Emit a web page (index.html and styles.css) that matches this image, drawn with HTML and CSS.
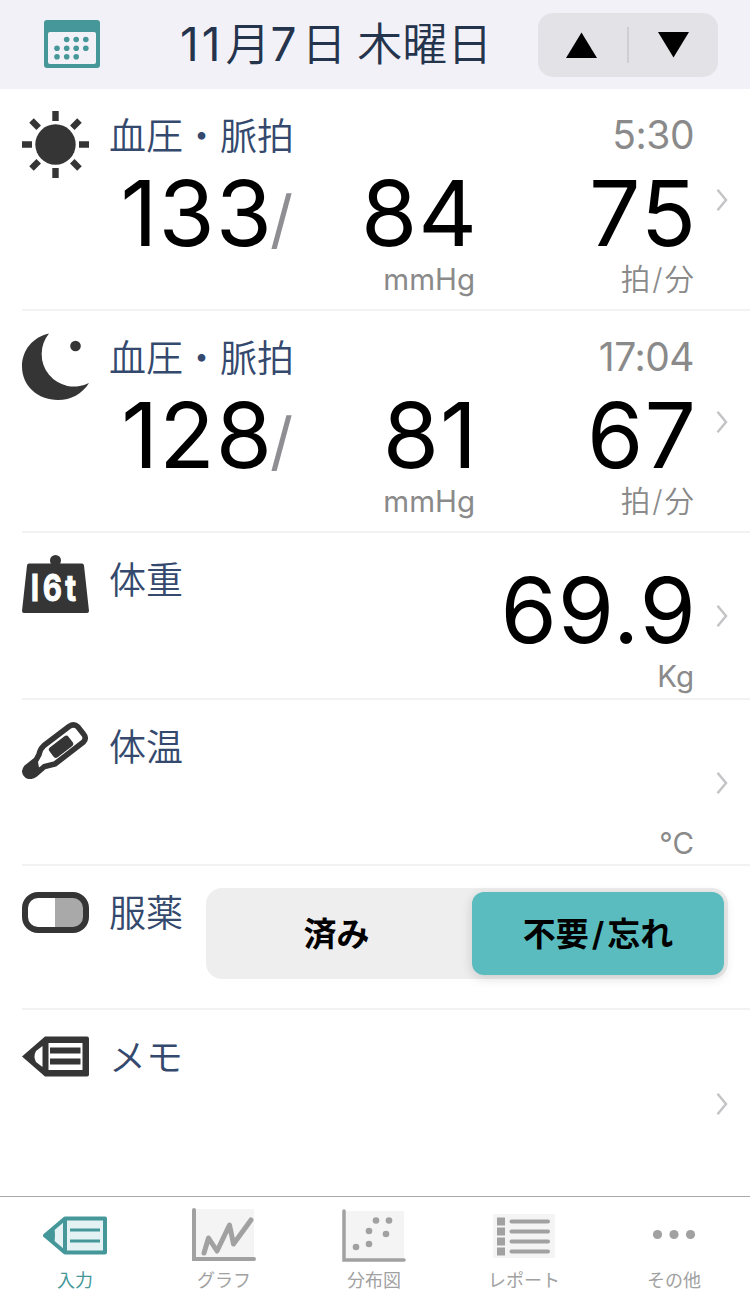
FILE: index.html
```
<!DOCTYPE html>
<html lang="ja">
<head>
  <meta charset="UTF-8">
  <title>血圧・脈拍の記録</title>
  <link rel="stylesheet" href="styles.css">
</head>
<body>

<header class="topo">
  <svg class="calendario" width="56" height="48" viewBox="0 0 56 48">
    <rect width="56" height="48" rx="3" fill="#459799"/>
    <rect x="4" y="12" width="48" height="32" rx="2" fill="#f2f1f7"/>
    <g fill="#459799">
      <circle cx="22.700" cy="19.500" r="2.800"/><circle cx="32.200" cy="19.500" r="2.800"/><circle cx="41.800" cy="19.500" r="2.800"/>
      <circle cx="13" cy="28.300" r="2.800"/><circle cx="22.700" cy="28.300" r="2.800"/><circle cx="32.200" cy="28.300" r="2.800"/><circle cx="41.800" cy="28.300" r="2.800"/>
      <circle cx="13" cy="36.800" r="2.800"/><circle cx="22.700" cy="36.800" r="2.800"/><circle cx="32.200" cy="36.800" r="2.800"/>
    </g>
  </svg>
  <h1><span>11</span>月<span>7</span>日 木曜日</h1>
  <div class="setas">
    <svg width="31" height="26" viewBox="0 0 31 26"><path d="M15.500 0.500 31 26H0z"/></svg>
    <span class="divisor"></span>
    <svg width="31" height="26" viewBox="0 0 31 26"><path d="M0 0h31L15.500 25.500z"/></svg>
  </div>
</header>

<main>
  <section class="linha pressao">
    <svg class="icone" width="67" height="67" viewBox="0 0 67 67">
      <circle cx="33.500" cy="33.500" r="20.200" fill="#353535"/>
      <g stroke="#353535" stroke-width="6.400">
        <path d="M33.500 0v10M33.500 57v10M0 33.500h10M57 33.500h10M9.500 9.500l7.200 7.200M50.300 50.300l7.200 7.200M9.500 57.500l7.200-7.200M50.300 16.700l7.200-7.200"/>
      </g>
    </svg>
    <div class="corpo">
      <div class="cabeca"><h2>血圧・脈拍</h2><span class="hora">5:30</span></div>
      <div class="valores"><div><b>133</b><i>/</i></div><div><b>84</b></div><div><b>75</b></div></div>
      <div class="unidades"><span></span><span>mmHg</span><span class="bpm">拍<em>/</em>分</span></div>
    </div>
    <svg class="avanca" width="12" height="24" viewBox="0 0 12 24"><path d="M1.500 1.800 10 12 1.500 22.200"/></svg>
  </section>

  <section class="linha pressao">
    <svg class="icone" width="67" height="67" viewBox="0 0 67 67">
      <path d="M27 .5A32.500 32.500 0 0 0 67 50C60 61 49 67 36 67C16 67 0 53 0 33.500C0 17 11 4 27 .5z" fill="#353535"/>
      <circle cx="53.500" cy="13" r="5.300" fill="#353535"/>
    </svg>
    <div class="corpo">
      <div class="cabeca"><h2>血圧・脈拍</h2><span class="hora">17:04</span></div>
      <div class="valores"><div><b>128</b><i>/</i></div><div><b>81</b></div><div><b>67</b></div></div>
      <div class="unidades"><span></span><span>mmHg</span><span class="bpm">拍<em>/</em>分</span></div>
    </div>
    <svg class="avanca" width="12" height="24" viewBox="0 0 12 24"><path d="M1.500 1.800 10 12 1.500 22.200"/></svg>
  </section>

  <section class="linha peso">
    <svg class="icone" width="67" height="58" viewBox="0 0 67 58">
      <circle cx="33.500" cy="5.500" r="5.500" fill="#353535"/>
      <path d="M7 8.500H60q1.800 0 2 2L67 56q0 2-2 2H2q-2 0-2-2L5 10.500q.2-2 2-2z" fill="#353535"/>
      <text class="tonelada" transform="scale(.8 1)" x="11 26 54" y="46.500">I6t</text>
    </svg>
    <div class="corpo">
      <h2>体重</h2>
      <div class="medida">
        <div class="valor"><b>69.9</b></div>
        <div class="unidade">Kg</div>
      </div>
    </div>
    <svg class="avanca" width="12" height="24" viewBox="0 0 12 24"><path d="M1.500 1.800 10 12 1.500 22.200"/></svg>
  </section>

  <section class="linha temperatura">
    <svg class="icone" width="67" height="57" viewBox="0 0 67 57">
      <path d="M47 4.500 22 23.500Q18 27 17 32.500L14 38 4.500 45.500Q1 50 5 53.500Q9 55.500 13 52.500L22.500 44.500 33 42 61.500 20Q65 16 61.500 12L56 5Q52 1 47 4.500z" fill="#fff" stroke="#353535" stroke-width="5.500"/>
      <path d="M14 38 4 46Q0 52 6 55Q10 56 13 53L22 45 17 45.500 16 40z" fill="#353535"/>
      <rect x="27" y="18.500" width="24" height="12.500" rx="3" transform="rotate(-37 39 24.700)" fill="#353535"/>
    </svg>
    <div class="corpo">
      <h2>体温</h2>
      <div class="medida">
        <div class="valor"></div>
        <div class="unidade">°C</div>
      </div>
    </div>
    <svg class="avanca" width="12" height="24" viewBox="0 0 12 24"><path d="M1.500 1.800 10 12 1.500 22.200"/></svg>
  </section>

  <section class="linha remedio">
    <svg class="icone" width="67" height="41" viewBox="0 0 67 41">
      <rect x="3" y="3" width="61" height="35" rx="13" fill="#fff"/>
      <path d="M33 3h18q13 0 13 13v9q0 13-13 13H33z" fill="#a9a9a9"/>
      <rect x="3" y="3" width="61" height="35" rx="13" fill="none" stroke="#353535" stroke-width="6"/>
    </svg>
    <h2>服薬</h2>
    <div class="opcoes">
      <button>済み</button>
      <button class="ativo">不要<span>/</span>忘れ</button>
    </div>
  </section>

  <section class="linha memo">
    <svg class="icone" width="67" height="41" viewBox="0 0 67 41">
      <path d="M23 .5H65q2 0 2 2V38.500q0 2-2 2H23L0 20.500z" fill="#353535"/>
      <path d="M26.500 7H60.500V34H26.500z" fill="#fff"/>
      <path d="M20.500 10V31L14 26Q11 20.500 14 15z" fill="#fff"/>
      <path d="M28 14.500H58.500M28 25.500H58.500" stroke="#353535" stroke-width="6"/>
    </svg>
    <div class="corpo"><h2>メモ</h2></div>
    <svg class="avanca" width="12" height="24" viewBox="0 0 12 24"><path d="M1.500 1.800 10 12 1.500 22.200"/></svg>
  </section>
</main>

<nav class="abas">
  <a class="aba atual">
    <svg width="64" height="54" viewBox="0 0 64 54">
      <path d="M22 10.500H62V44.500H22L2 27.500z" fill="#e5f2f3" stroke="#459799" stroke-width="4" stroke-linejoin="round"/>
      <path d="M22 10v35" stroke="#459799" stroke-width="4"/>
      <path d="M1 27.500 11 19Q13 27 11 36z" fill="#459799"/>
      <path d="M27 22H57M27 33H57" stroke="#459799" stroke-width="3"/>
    </svg>
    入力
  </a>
  <a class="aba">
    <svg width="64" height="54" viewBox="0 0 64 54">
      <path d="M2 1h60v51H2z" fill="#f4f4f4"/>
      <path d="M2 2v49H62" fill="none" stroke="#a1a1a1" stroke-width="4" stroke-linecap="round"/>
      <path d="M12 45 16.500 30 25 43 37.500 17 41.500 36 59 12" fill="none" stroke="#a1a1a1" stroke-width="5" stroke-linecap="round" stroke-linejoin="round"/>
    </svg>
    グラフ
  </a>
  <a class="aba">
    <svg width="64" height="54" viewBox="0 0 64 54">
      <path d="M2 3h60v50H2z" fill="#f4f4f4"/>
      <path d="M2 3v49H62" fill="none" stroke="#a1a1a1" stroke-width="3.500" stroke-linecap="round"/>
      <g fill="#a1a1a1"><circle cx="14" cy="39" r="3.300"/><circle cx="27" cy="23" r="3.300"/><circle cx="27" cy="36" r="3.300"/><circle cx="34" cy="12.500" r="3.300"/><circle cx="47" cy="12.500" r="3.300"/><circle cx="44" cy="26" r="3.300"/></g>
    </svg>
    分布図
  </a>
  <a class="aba">
    <svg width="64" height="54" viewBox="0 0 64 54">
      <path d="M1 6h62v44H1z" fill="#f4f4f4"/>
      <path d="M9 9.500v38" stroke="#a1a1a1" stroke-width="8" stroke-dasharray="8 2"/>
      <path d="M19.500 13.500H56M19.500 23.500H56M19.500 33.500H56M19.500 43.500H56" stroke="#a1a1a1" stroke-width="4" stroke-linecap="round"/>
    </svg>
    レポート
  </a>
  <a class="aba">
    <svg width="64" height="54" viewBox="0 0 64 54">
      <g fill="#a1a1a1"><circle cx="15.500" cy="26.500" r="4.600"/><circle cx="32" cy="26.500" r="4.600"/><circle cx="48.500" cy="26.500" r="4.600"/></g>
    </svg>
    その他
  </a>
</nav>

</body>
</html>
```
FILE: styles.css
```
* {
  box-sizing: border-box;
}
body {
  margin: 0;
  height: 1295px;
  display: flex;
  flex-direction: column;
  background-color: #fff;
  font-family: Inter, "Noto Sans CJK JP", sans-serif;
}
h1, h2 {
  margin: 0;
  font-weight: 350;
}
.topo {
  height: 89px;
  display: flex;
  align-items: center;
  padding: 0 32px 0 44px;
  background-color: #f2f1f7;
}
.calendario {
  margin-bottom: 1px;
}
h1 {
  width: 310px;
  margin: 0 48px 0 80px;
  font-size: 45px;
  line-height: 90px;
  color: #24344d;
  white-space: nowrap;
  word-spacing: -2px;
}
h1 span {
  font-size: 46px;
  font-weight: 400;
  letter-spacing: 3px;
  margin-right: 2px;
}
.setas {
  width: 180px;
  height: 64px;
  flex: none;
  display: flex;
  align-items: center;
  justify-content: space-between;
  padding: 0 29px 0 28px;
  border-radius: 15px;
  background-color: #e3e2e7;
}
.divisor {
  width: 2px;
  height: 36px;
  background-color: #cfced3;
}
main {
  flex: 1;
}
.linha {
  display: flex;
  margin-left: 22px;
  padding: 22px 22px 0 0;
  border-bottom: 2px solid #f2f2f2;
}
.icone {
  flex: none;
  margin-right: 20px;
}
h2 {
  font-size: 37px;
  line-height: 52px;
  color: #34496d;
}
.corpo {
  width: 585px;
  display: flex;
  justify-content: space-between;
}
.pressao .corpo {
  display: block;
}
.cabeca {
  height: 48px;
  display: flex;
  justify-content: space-between;
}
.hora {
  font-size: 39px;
  line-height: 48px;
  letter-spacing: -0.5px;
  color: #8a8a8a;
}
.valores, .unidades {
  display: grid;
  grid-template-columns: 184px 182px 219px;
  text-align: right;
}
.valores, .valor {
  height: 99px;
  line-height: 109px;
}
b {
  font-size: 91px;
  font-weight: 400;
  letter-spacing: 1px;
  margin-right: -3px;
  color: #000;
}
i {
  font-size: 64px;
  font-style: normal;
  vertical-align: 4px;
  line-height: 1;
  color: #8e8e93;
}
.unidades, .unidade {
  height: 42px;
  font-size: 29.5px;
  line-height: 42px;
  color: #8a8a8a;
  text-align: right;
}
.bpm {
  font-weight: 350;
}
em {
  font-style: normal;
  margin: 0 2px;
}
.avanca {
  align-self: center;
  margin: 0 0 21px auto;
}
.avanca path {
  fill: none;
  stroke: #c4c4c6;
  stroke-width: 2.5;
}
.pressao {
  height: 222px;
}
.peso {
  height: 167px;
}
.temperatura {
  height: 166px;
}
.medida {
  padding-top: 1px;
}
.tonelada {
  font-family: Inter, sans-serif;
  font-size: 37px;
  font-weight: 700;
  fill: #fff;
  stroke: #fff;
  stroke-width: 1px;
}
.remedio {
  height: 144px;
}
.remedio .icone {
  margin-top: 4px;
}
.opcoes {
  width: 522px;
  height: 91px;
  flex: none;
  display: flex;
  margin-left: 23px;
  padding: 4px;
  border-radius: 16px;
  background-color: #eee;
}
.opcoes button {
  flex: 1;
  padding: 0 9px 3px 0;
  border: 0;
  border-radius: 12px;
  background: none;
  font: 700 33px Inter, "Noto Sans CJK JP", sans-serif;
  color: #000;
}
.opcoes .ativo {
  flex: 0 0 252px;
  padding-right: 0;
  background-color: #5abcbf;
  box-shadow: 0 3px 12px rgba(0, 0, 0, 0.15);
}
.opcoes span {
  margin: 0 3px;
  font-weight: 600;
}
.memo {
  height: 186px;
  border-bottom: 0;
}
.memo .icone {
  margin-top: 4px;
}
.abas {
  height: 99px;
  display: grid;
  grid-template-columns: repeat(5, 1fr);
  border-top: 1px solid #aaa;
}
.aba {
  display: flex;
  flex-direction: column;
  align-items: center;
  padding: 11px 2px 0 0;
  font-size: 18px;
  line-height: 38px;
  color: #a1a1a1;
}
.atual {
  padding-right: 0;
  color: #459799;
}
```
